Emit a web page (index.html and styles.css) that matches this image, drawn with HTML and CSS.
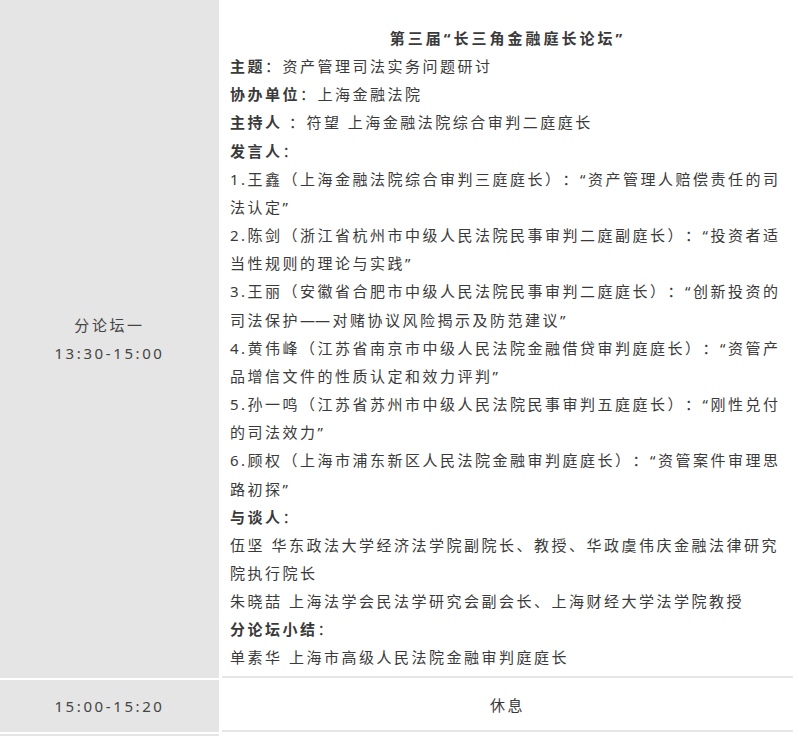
FILE: index.html
```html
<!DOCTYPE html>
<html lang="zh-CN">
<head>
  <meta charset="UTF-8">
  <title>长三角金融庭长论坛 议程</title>
  <link rel="stylesheet" href="styles.css">
</head>
<body>

  <div class="agenda">

    <div class="row">
      <div class="time">
        <div>分论坛一</div>
        <div>13:30-15:00</div>
      </div>
      <div class="detail">
        <div class="title">第三届“长三角金融庭长论坛”</div>
        <div><b>主题</b>：资产管理司法实务问题研讨</div>
        <div><b>协办单位</b>：上海金融法院</div>
        <div><b>主持人</b> ：符望 上海金融法院综合审判二庭庭长</div>
        <div><b>发言人</b>：</div>
        <div>1.王鑫（上海金融法院综合审判三庭庭长）：“资产管理人赔偿责任的司法认定”</div>
        <div>2.陈剑（浙江省杭州市中级人民法院民事审判二庭副庭长）：“投资者适当性规则的理论与实践”</div>
        <div>3.王丽（安徽省合肥市中级人民法院民事审判二庭庭长）：“创新投资的司法保护<span class="dash">——</span>对赌协议风险揭示及防范建议”</div>
        <div>4.黄伟峰（江苏省南京市中级人民法院金融借贷审判庭庭长）：“资管产品增信文件的性质认定和效力评判”</div>
        <div>5.孙一鸣（江苏省苏州市中级人民法院民事审判五庭庭长）：“刚性兑付的司法效力”</div>
        <div>6.顾权（上海市浦东新区人民法院金融审判庭庭长）：“资管案件审理思路初探”</div>
        <div><b>与谈人</b>：</div>
        <div>伍坚 华东政法大学经济法学院副院长、教授、华政虞伟庆金融法律研究院执行院长</div>
        <div>朱晓喆 上海法学会民法学研究会副会长、上海财经大学法学院教授</div>
        <div><b>分论坛小结</b>：</div>
        <div>单素华 上海市高级人民法院金融审判庭庭长</div>
      </div>
    </div>

    <div class="row">
      <div class="time">
        <div>15:00-15:20</div>
      </div>
      <div class="detail center">
        <div>休息</div>
      </div>
    </div>

    <div class="row last">
      <div class="time"></div>
      <div class="detail"></div>
    </div>

  </div>

</body>
</html>
```

FILE: styles.css
```css
body {
  margin: 0;
  background: #fff;
  font-family: "Noto Sans", "Noto Sans CJK SC", sans-serif;
  font-size: 15px;
  letter-spacing: 2.5px;
  color: #3a3a3a;
  text-spacing-trim: space-all;
}

.agenda {
  width: 793px;
  display: flex;
  flex-direction: column;
  gap: 2px;
}

.row {
  display: grid;
  grid-template-columns: 219px 1fr;
  column-gap: 3px;
}

.time {
  background: #e5e5e5;
  display: flex;
  flex-direction: column;
  justify-content: center;
  align-items: center;
  line-height: 28px;
  letter-spacing: 2.6px;
  color: #444;
}

.detail {
  border-bottom: 2px solid #e6e6e6;
  padding: 24px 8px 4px 8px;
  line-height: 28.15px;
}

.detail b {
  font-weight: 700;
}

.dash {
  letter-spacing: 0;
  margin-right: 2.5px;
}

.title {
  text-align: center;
  font-weight: 700;
  letter-spacing: 3px;
}

.detail.center {
  height: 50px;
  padding: 0 8px;
  display: flex;
  align-items: center;
  justify-content: center;
}

.row.last .time,
.row.last .detail {
  height: 20px;
  padding: 0;
}
```
